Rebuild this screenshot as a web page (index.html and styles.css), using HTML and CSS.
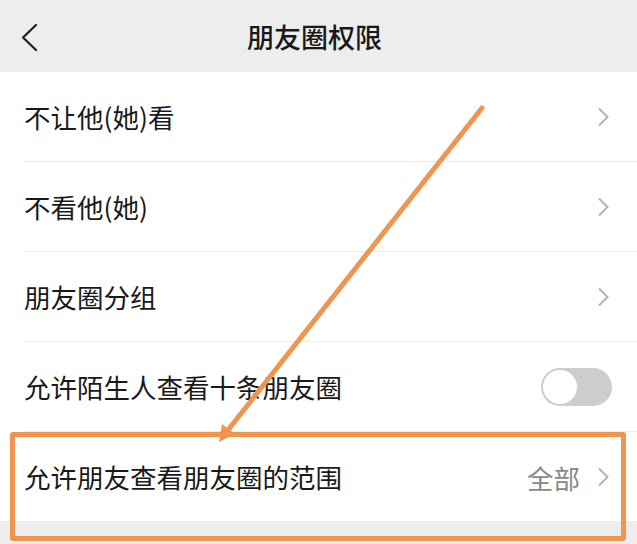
FILE: index.html
```html
<!DOCTYPE html>
<html lang="zh-CN">
<head>
<meta charset="utf-8">
<title>朋友圈权限</title>
<link rel="stylesheet" href="styles.css">
</head>
<body>
<div class="screen">
  <header class="nav">
    <span class="back">
      <svg width="20" height="30" viewBox="0 0 20 30"><polyline points="16,4 3,16.5 16,29" fill="none" stroke="#1f1f1f" stroke-width="2.2" stroke-linecap="round" stroke-linejoin="round"/></svg>
    </span>
    <h1 class="title">朋友圈权限</h1>
    <span></span>
  </header>
  <section class="list">
    <div class="row"><span class="label">不让他(她)看</span><svg class="chev" width="12" height="20" viewBox="0 0 12 20"><polyline points="2,1.5 10.5,10 2,18.5" fill="none" stroke="#b3b3b3" stroke-width="2"/></svg></div>
    <div class="row"><span class="label">不看他(她)</span><svg class="chev" width="12" height="20" viewBox="0 0 12 20"><polyline points="2,1.5 10.5,10 2,18.5" fill="none" stroke="#b3b3b3" stroke-width="2"/></svg></div>
    <div class="row"><span class="label">朋友圈分组</span><svg class="chev" width="12" height="20" viewBox="0 0 12 20"><polyline points="2,1.5 10.5,10 2,18.5" fill="none" stroke="#b3b3b3" stroke-width="2"/></svg></div>
    <div class="row"><span class="label">允许陌生人查看十条朋友圈</span><span class="toggle"><span class="knob"></span></span></div>
    <div class="row last"><span class="label">允许朋友查看朋友圈的范围</span><span class="value">全部</span><svg class="chev" width="12" height="20" viewBox="0 0 12 20"><polyline points="2,1.5 10.5,10 2,18.5" fill="none" stroke="#b3b3b3" stroke-width="2"/></svg></div>
  </section>
  <div class="highlight"></div>
  <svg class="arrow" width="637" height="544" viewBox="0 0 637 544">
    <line x1="482" y1="108" x2="228" y2="430" stroke="#ef9550" stroke-width="5" stroke-linecap="round"/>
    <polygon points="219,442 235,434 222,424" fill="#ef9550"/>
  </svg>
</div>
</body>
</html>
```
FILE: styles.css
```css
html, body {
  margin: 0;
  padding: 0;
}
body {
  background: #ededed;
  font-family: "Noto Sans CJK SC", "Noto Sans", sans-serif;
  color: #191919;
}
.screen {
  position: relative;
  width: 637px;
  height: 544px;
  overflow: hidden;
  background: #ededed;
}
.nav {
  height: 72px;
  display: grid;
  grid-template-columns: 80px 1fr 80px;
  align-items: center;
  background: #ededed;
}
.back {
  display: flex;
  align-items: center;
  padding-left: 20px;
  height: 30px;
}
.title {
  margin: 0;
  text-align: center;
  font-size: 27px;
  font-weight: 500;
  color: #181818;
  padding-right: 8px;
}
.list {
  background: #ffffff;
}
.row {
  display: flex;
  align-items: center;
  height: 89px;
  margin-left: 24px;
  padding-right: 28px;
  border-bottom: 1px solid #ededed;
}
.row.last {
  height: 89px;
  border-bottom: none;
}
.label {
  flex: 1;
  font-size: 26.5px;
  line-height: 1;
  color: #191919;
  padding-top: 2px;
}
.value {
  font-size: 26.5px;
  color: #888888;
  margin-right: 17px;
  padding-top: 2px;
}
.chev {
  display: block;
}
.toggle {
  position: relative;
  width: 71px;
  height: 38px;
  margin-right: -3px;
  border-radius: 19px;
  background: #cdcdcd;
}
.knob {
  position: absolute;
  left: 2px;
  top: 2px;
  width: 34px;
  height: 34px;
  border-radius: 50%;
  background: #ffffff;
}
.highlight {
  position: absolute;
  left: 10px;
  top: 432px;
  width: 616px;
  height: 109px;
  box-sizing: border-box;
  border: 5px solid #ef9550;
  border-radius: 3px;
}
.arrow {
  position: absolute;
  left: 0;
  top: 0;
}
```
